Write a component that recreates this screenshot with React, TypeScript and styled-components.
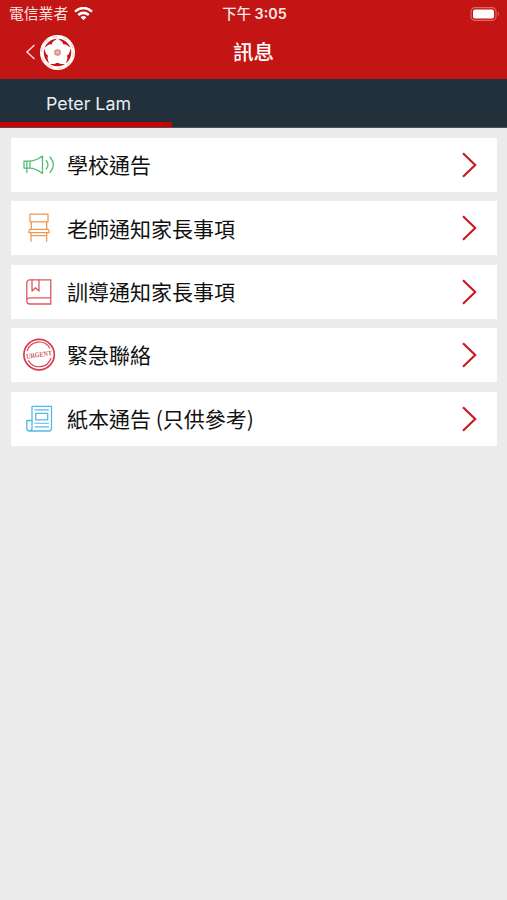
import React from "react";
import styled, { createGlobalStyle } from "styled-components";

const GlobalStyle = createGlobalStyle`
  * { box-sizing: border-box; }
  body {
    margin: 0;
    background: #ebebeb;
    font-family: Inter, "Noto Sans CJK TC", sans-serif;
  }
`;

const Screen = styled.div`
  width: 507px;
  height: 900px;
  overflow: hidden;
  background: #ebebeb;
`;

const Header = styled.header`
  height: 79px;
  background: #c31614;
  color: #fff;
`;

const StatusBar = styled.div`
  display: grid;
  grid-template-columns: 1fr auto 1fr;
  align-items: center;
  height: 27px;
  padding: 0 6px 0 8px;
  line-height: 20px;
`;

const Carrier = styled.div`
  display: flex;
  align-items: center;
  gap: 6px;
  padding: 1px 0 0 1px;
  font-size: 14.8px;
  color: #fbe3e0;
`;

const Clock = styled.div`
  font-size: 14.3px;
  font-weight: 600;
  color: #fbe9e7;
  white-space: nowrap;
`;

const Zh = styled.span`
  font-weight: 500;
`;

const Battery = styled.svg`
  justify-self: end;
  display: block;
`;

const NavBar = styled.div`
  display: grid;
  grid-template-columns: 1fr auto 1fr;
  align-items: center;
  height: 50px;
  padding: 0 24px;
`;

const BackGroup = styled.div`
  display: flex;
  align-items: center;
  gap: 2px;
`;

const Title = styled.h1`
  margin: 0;
  padding-top: 2px;
  font-size: 20.5px;
  font-weight: 500;
  line-height: 30px;
`;

const Tabs = styled.nav`
  display: flex;
  height: 49px;
  background: #21303a;
  border-bottom: 1px solid #4b5256;
`;

const Tab = styled.div`
  width: 172px;
  height: 48px;
  padding: 0 0 0 5px;
  border-bottom: 5px solid #c90204;
  color: #e7edf0;
  font-size: 17.8px;
  line-height: 50px;
  text-align: center;
`;

const List = styled.main`
  display: flex;
  flex-direction: column;
  gap: 9.4px;
  padding: 10px 10px 0 11px;
`;

const Row = styled.div`
  display: flex;
  align-items: center;
  height: 54px;
  padding: 0 17px 0 11px;
  background: #fff;
`;

const RowIcon = styled.svg`
  flex: none;
  width: 34px;
  height: 34px;
  fill: none;
  stroke-linecap: round;
  stroke-linejoin: round;
`;

const Label = styled.span`
  flex: 1;
  padding: 0 0 1.6px 11px;
  color: #111;
  font-family: "Noto Sans CJK TC", sans-serif;
  font-size: 21px;
  line-height: 30px;
  white-space: pre;
`;

const StampText = styled.text`
  font-family: "Liberation Serif", serif;
  font-size: 7px;
  font-weight: 700;
`;

const Megaphone = () => (
  <RowIcon viewBox="0 0 34 34" stroke="#55b873" strokeWidth="1.25">
    <path d="M2 13h6v7H2zM4.800 13v11.500M8 13.100c5 0 8-1.800 12.500-5v17.300C16 22 13 20 8 20" />
    <path d="M24.200 12.500q3.600 4.200 0 8.500M28 9q6.800 7.600 0 15.500" />
  </RowIcon>
);

const Chair = () => (
  <RowIcon viewBox="0 0 34 34" stroke="#ef9650" strokeWidth="1.25">
    <path d="M8 3.200h18v7.600H8zM9.300 10.800v7.600M24.700 10.800v7.600M7.800 18.400h18.400c.8 1 1.200 2 .9 3.300H6.900c-.3-1.300.1-2.300.9-3.300zM9 21.700v8.500M24.700 21.700v8.500M9 24.700h15.700" />
  </RowIcon>
);

const Book = () => (
  <RowIcon viewBox="0 0 34 34" stroke="#dc5961" strokeWidth="1.3">
    <path d="M28.800 22.800V4.800H8Q4.800 4.800 4.800 8v18Q4.800 29 8 29h20.800v-6.200H8Q4.800 22.800 4.800 26" />
    <path d="M10 5v11l3.500-3.300 3.500 3.300V5" />
  </RowIcon>
);

const Stamp = () => (
  <RowIcon viewBox="0 0 34 34" stroke="#d83b4d">
    <circle cx="17.100" cy="16.600" r="15.200" strokeWidth="1.700" />
    <path d="M5.300 12.500a12.500 12.500 0 0 1 22.500-2.500M29 20.200a12.500 12.500 0 0 1-22.500 2.500" strokeWidth="1.100" />
    <StampText x="4" y="19" textLength="26" lengthAdjust="spacingAndGlyphs" fill="#d5505e" stroke="none" transform="rotate(-8 17 17)">
      URGENT
    </StampText>
  </RowIcon>
);

const Newspaper = () => (
  <RowIcon viewBox="0 0 34 34" stroke="#55b9e6" strokeWidth="1.3">
    <path d="M10 26V4.400h19.500V26q0 3-2.500 3H7.500q2.500 0 2.500-3zM10 18.500H4.800V26q0 3 2.700 3" />
    <path d="M13.700 11.300h12v6.500h-12z" />
    <path d="M13 7.900h13.500M13 21.300h13.500M13 24.900h13.500" strokeWidth="1.100" />
  </RowIcon>
);

const Logo = () => (
  <svg width="37" height="37" viewBox="-18.500 -18.500 37 37">
    <circle r="17.500" fill="#fff" />
    <circle r="15.900" fill="none" stroke="#d94743" strokeWidth="1.300" strokeDasharray="5 4.990" opacity=".25" />
    <circle r="13.700" fill="#c31614" />
    <g fill="#fff">
      <circle r="10" />
      {[0, 72, 144, 216, 288].map((angle) => (
        <path key={angle} transform={`rotate(${angle})`} d="M0 0L-5.900-7.900Q-5.500-11-2.500-12.300L0-14.200 2.500-12.300Q5.500-11 5.900-7.900z" />
      ))}
    </g>
    <circle r="2.700" fill="#efb4b0" stroke="#df827d" strokeWidth="1.200" />
  </svg>
);

const items = [
  { label: "學校通告", Icon: Megaphone },
  { label: "老師通知家長事項", Icon: Chair },
  { label: "訓導通知家長事項", Icon: Book },
  { label: "緊急聯絡", Icon: Stamp },
  { label: "紙本通告 (只供參考)", Icon: Newspaper },
];

export default function App() {
  return (
    <Screen>
      <GlobalStyle />
      <Header>
        <StatusBar>
          <Carrier>
            電信業者
            <svg width="19" height="14" viewBox="0 0 19 14" fill="none" stroke="#fff" strokeWidth="2.500">
              <path d="M1 4.600Q9.500-2.600 18 4.600M4.200 8q5.300-4.300 10.600 0" />
              <path d="M6.600 10.200q2.900-2.300 5.800 0L9.500 13.200z" fill="#fff" stroke="none" />
            </svg>
          </Carrier>
          <Clock><Zh>下午</Zh> 3:05</Clock>
          <Battery width="31" height="14" viewBox="0 0 31 14">
            <rect x="1" y=".7" width="25" height="12.600" rx="3.800" fill="none" stroke="#db6a67" strokeWidth="1.200" />
            <rect x="3" y="2.600" width="21" height="8.800" rx="2" fill="#fff" />
            <path d="M27.800 4.800q2.300 2.200 0 4.400z" fill="#db6a67" />
          </Battery>
        </StatusBar>
        <NavBar>
          <BackGroup>
            <svg width="13" height="18" viewBox="0 0 13 18" fill="none" stroke="#f7d9d5" strokeWidth="1.500">
              <path d="M10.500 2L3 9l7.500 7" />
            </svg>
            <Logo />
          </BackGroup>
          <Title>訊息</Title>
        </NavBar>
      </Header>
      <Tabs>
        <Tab>Peter Lam</Tab>
      </Tabs>
      <List>
        {items.map(({ label, Icon }) => (
          <Row key={label}>
            <Icon />
            <Label>{label}</Label>
            <svg width="20" height="30" viewBox="0 0 20 30" fill="none" stroke="#c81d22" strokeWidth="2.200">
              <path d="M3 3.200L15.200 15 3 26.800" />
            </svg>
          </Row>
        ))}
      </List>
    </Screen>
  );
}
